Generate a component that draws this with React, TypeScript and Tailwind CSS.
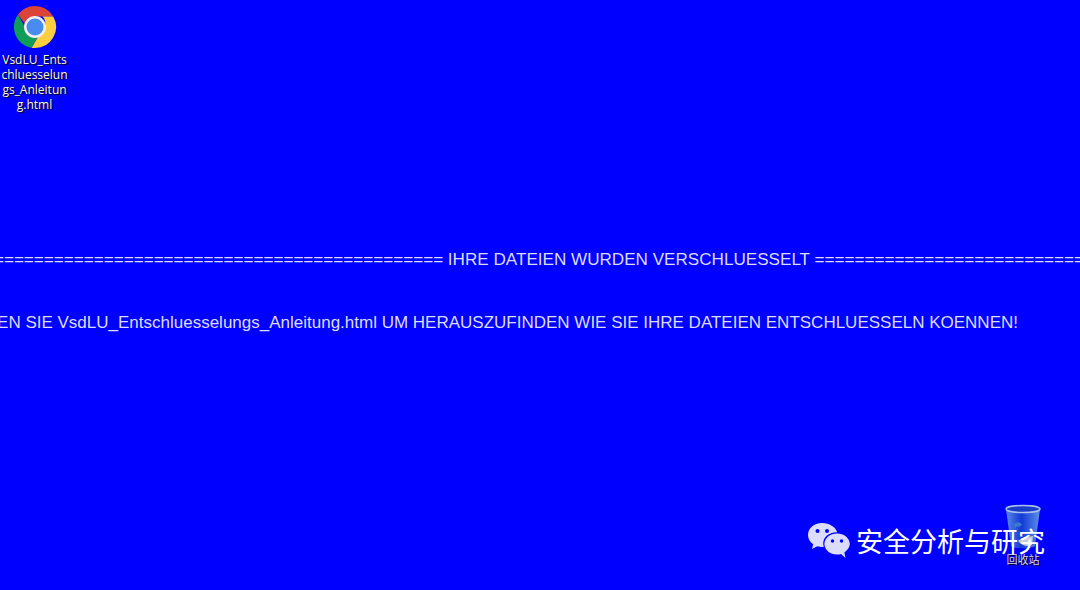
import React from "react";

const rule = "=".repeat(50);

function ChromeIcon() {
  return (
    <svg viewBox="0 0 48 48" className="h-[48px] w-[48px]">
      <path fill="#DB4437" d="M24 3a21 21 0 0 1 18.200 10.500H24a10.500 10.500 0 0 0-10 7.200L6.900 11.700A21 21 0 0 1 24 3z" />
      <path fill="#0F9D58" d="M6.900 11.700 15.900 27.200a10.500 10.500 0 0 0 10.900 6.900l-6.200 10.600A21 21 0 0 1 6.900 11.700z" />
      <path fill="#FFCD40" d="M42.200 13.500A21 21 0 0 1 24 45h-3.400l8.900-15.500A10.500 10.500 0 0 0 31.600 13.500z" />
      <circle cx="24" cy="24" r="11" fill="#F1F1F1" />
      <circle cx="24" cy="24" r="8.500" fill="#4A8BF0" />
    </svg>
  );
}

function WeChatLogo() {
  return (
    <svg viewBox="0 0 44 38" className="h-[38px] w-[44px]">
      <path fill="#DCDCFF" d="M15 1C7 1 1 6.400 1 13c0 3.800 2 7 5.200 9.300L5 27l5.300-2.700c1.600.5 3.200.8 4.700.8.500 0 1.200 0 1.800-.1-.4-1.200-.6-2.400-.6-3.600 0-6.200 5.800-11.200 13-11.200h.9C28.600 5 22.400 1 15 1z" />
      <path fill="#DCDCFF" d="M30 11.500c-7 0-12.600 4.700-12.600 10.500S23 32.500 30 32.500c1.400 0 2.800-.2 4.100-.6l4.400 4-1.100-5.500c3.200-2.200 5.400-5.300 5.400-8.400 0-5.800-5.700-10.500-12.800-10.500z" />
      <circle cx="10.500" cy="9" r="2" fill="#0000FF" />
      <circle cx="20" cy="9" r="2" fill="#0000FF" />
      <circle cx="25.500" cy="19" r="1.700" fill="#0000FF" />
      <circle cx="34.500" cy="19" r="1.700" fill="#0000FF" />
    </svg>
  );
}

function RecycleBin() {
  return (
    <svg viewBox="0 0 36 46" className="h-[46px] w-[36px]">
      <defs>
        <linearGradient id="binBody" x1="0" x2="1" y1="0" y2="0">
          <stop offset="0" stopColor="#5a8ae6" />
          <stop offset="0.45" stopColor="#1238d6" />
          <stop offset="1" stopColor="#5f90e8" />
        </linearGradient>
      </defs>
      <path fill="url(#binBody)" d="M1 5 6 42c3 3 21 3 24 0L35 5z" />
      <ellipse cx="18" cy="5" rx="17" ry="3.500" fill="#1a3ac8" stroke="#a9c2ec" strokeWidth="1.500" />
      <path fill="#3a7ad0" d="M9 20c3-3 7-2 8 1l-3 2-2-1-2 3z" />
      <path fill="#c9d0d8" d="M13 37c3-3 9-4 15-5l-1 9c-4 2-10 1-14-4z" />
    </svg>
  );
}

export default function App() {
  return (
    <div
      className="relative h-[590px] w-[1080px] overflow-hidden bg-[#0000ff]"
      style={{ fontFamily: '"Liberation Sans", Arial, sans-serif' }}
    >
      {/* Wallpaper text */}
      <div className="flex flex-col pt-[250px] text-[17px] leading-[19px] whitespace-nowrap text-[#dcdcff]">
        <div className="flex justify-start">
          <span className="ml-[-56px] text-[17.1px]">
            {rule} IHRE DATEIEN WURDEN VERSCHLUESSELT {rule}
          </span>
        </div>
        <div className="mt-[44px] flex justify-end pr-[62px]">
          <span>
            OEFFNEN SIE VsdLU_Entschluesselungs_Anleitung.html UM HERAUSZUFINDEN WIE SIE IHRE DATEIEN ENTSCHLUESSELN KOENNEN!
          </span>
        </div>
      </div>

      {/* Desktop icons */}
      <div className="absolute top-[3px] left-0 flex w-[69px] flex-col items-center">
        <ChromeIcon />
        <div
          className="mt-[1px] w-[69px] text-center text-[12px] leading-[15px] break-all text-[#fdfbc8] [text-shadow:1px_1px_1px_#000]"
          style={{ fontFamily: '"Open Sans", sans-serif' }}
        >
          VsdLU_Entschluesselungs_Anleitung.html
        </div>
      </div>

      <div className="absolute top-[504px] left-[1005px] flex w-[36px] flex-col items-center">
        <RecycleBin />
        <div
          className="mt-[2px] text-[11px] leading-[14px] whitespace-nowrap text-[#d8d8d8] [text-shadow:1px_1px_1px_#000]"
          style={{ fontFamily: '"Noto Sans CJK SC", sans-serif' }}
        >
          回收站
        </div>
      </div>

      {/* Watermark */}
      <div className="absolute top-[520px] left-[807px] flex items-center gap-[5px]">
        <WeChatLogo />
        <span
          className="text-[27px] leading-[42px] whitespace-nowrap text-white"
          style={{ fontFamily: '"Noto Sans CJK SC", sans-serif' }}
        >
          安全分析与研究
        </span>
      </div>
    </div>
  );
}
